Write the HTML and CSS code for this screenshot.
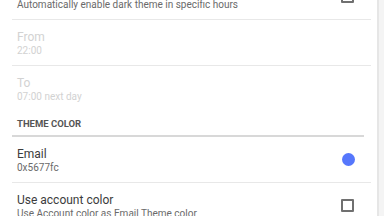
FILE: index.html
```html
<!DOCTYPE html>
<html>
    <head>
        <title>Settings</title>
        <link rel="stylesheet" href="styles.css">
    </head>
    <body>
        <div class="page">
            <div class="panel">
                <div class="row first">
                    <div class="texts">
                        <div class="title">Dark theme schedule</div>
                        <div class="sub">Automatically enable dark theme in specific hours</div>
                    </div>
                    <span class="check"></span>
                </div>
                <div class="row disabled">
                    <div class="texts">
                        <div class="title">From</div>
                        <div class="sub">22:00</div>
                    </div>
                </div>
                <div class="row disabled last">
                    <div class="texts">
                        <div class="title">To</div>
                        <div class="sub">07:00 next day</div>
                    </div>
                </div>
                <div class="header">THEME COLOR</div>
                <div class="row">
                    <div class="texts">
                        <div class="title">Email</div>
                        <div class="sub">0x5677fc</div>
                    </div>
                    <span class="dot"></span>
                </div>
                <div class="row">
                    <div class="texts">
                        <div class="title">Use account color</div>
                        <div class="sub">Use Account color as Email Theme color</div>
                    </div>
                    <span class="check"></span>
                </div>
            </div>
            <div class="side"></div>
        </div>
    </body>
</html>
```

FILE: styles.css
```css
body {
    margin: 0;
    font-family: Roboto, "Liberation Sans", sans-serif;
    background: #f4f4f4;
    overflow: hidden;
}
.page {
    display: flex;
    height: 216px;
}
.panel {
    width: 379px;
    background: #fff;
    border-right: 2px solid #e6e6e6;
    padding: 0 6px 0 12px;
    box-sizing: border-box;
    overflow: hidden;
}
.side {
    flex: 1;
}
.row {
    display: flex;
    align-items: center;
    height: 45px;
    border-bottom: 1px solid #e8e8e8;
    padding: 0 16px 0 5px;
}
.row.first {
    margin-top: -26px;
}
.row.last {
    border-bottom: none;
}
.texts {
    flex: 1;
}
.title {
    font-size: 12px;
    color: #3c3c3c;
    line-height: 16px;
}
.sub {
    font-size: 10px;
    color: #6a6a6a;
    line-height: 12px;
}
.disabled .title,
.disabled .sub {
    color: #d2d2d2;
}
.header {
    font-size: 9.5px;
    font-weight: bold;
    color: #555;
    padding: 7px 5px 6px;
    border-bottom: 2px solid #d8d8d8;
    margin-right: 7px;
}
.check {
    width: 9px;
    height: 9px;
    border: 2px solid #707070;
    border-radius: 1px;
    margin-right: 1px;
}
.dot {
    width: 13px;
    height: 13px;
    border-radius: 50%;
    background: #5677fc;
}
```
